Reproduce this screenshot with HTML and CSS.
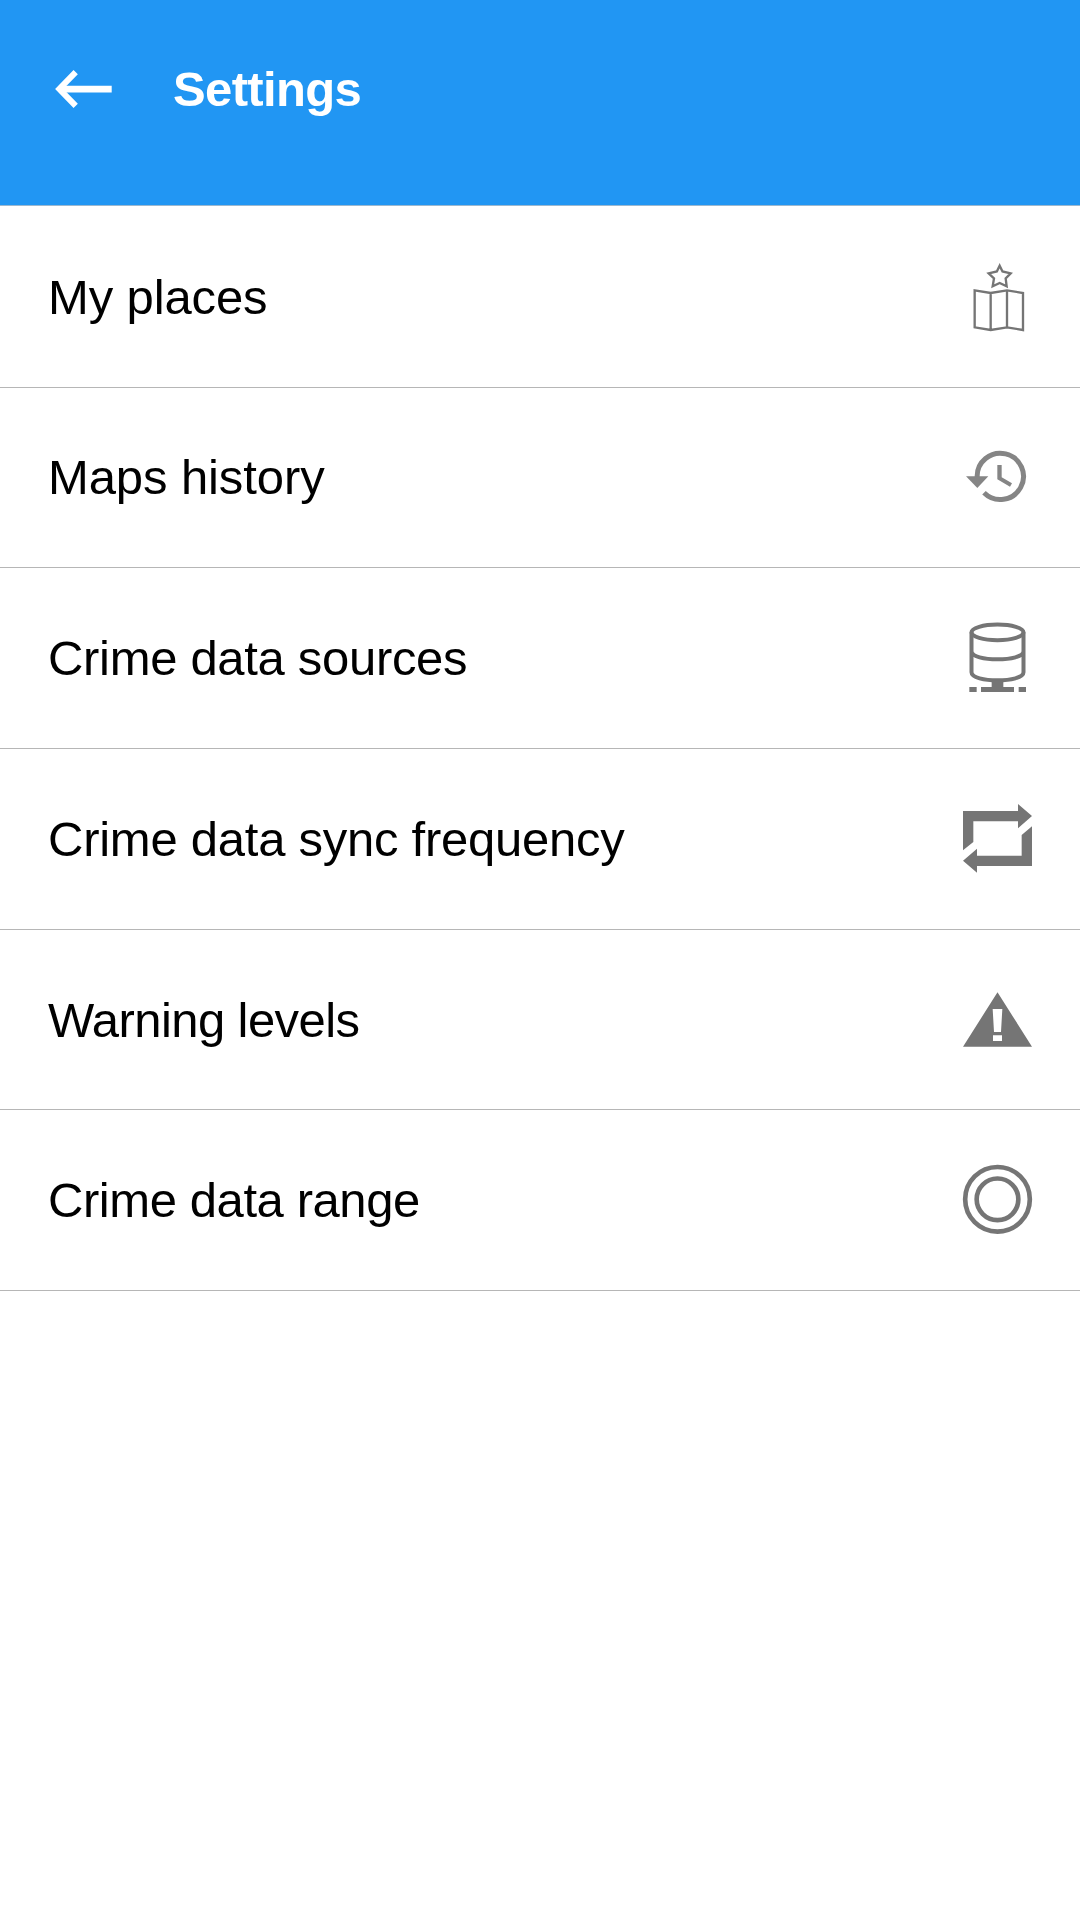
FILE: index.html
```html
<!DOCTYPE html>
<html lang="en">
<head>
<meta charset="utf-8">
<title>Settings</title>
<link rel="stylesheet" href="styles.css">
</head>
<body>
<header class="app-bar">
  <svg class="back" viewBox="0 0 60 44" aria-label="Back"><path class="shaft" d="M59.700 22.100H8"/><path d="M23.700 5.200L7.300 22L23.700 38.800"/></svg>
  <h1 class="title">Settings</h1>
</header>
<main class="list">
  <div class="row places"><span class="label">My places</span>
    <svg class="icon" viewBox="0 0 300 300"><g class="line"><path d="M149 47L157.500 64.500L182 70L167 85L170 109L149 99L128 109L132 85L116 70L140.500 64.500Z"/><path d="M74 121L122 129L171 121L219 129V240L171 232L122 240L74 232ZM122 129V240M171 121V232"/></g></svg></div>
  <div class="row past"><span class="label">Maps history</span>
    <svg class="icon history" viewBox="0 0 300 300"><path class="ring" d="M81.500 142A69.500 69.500 0 1 1 102 188.500"/><path d="M48 139H115L82 174Z"/><path d="M142 105H155V142L186 160L180 170L142 148Z"/></svg></div>
  <div class="row sources"><span class="label">Crime data sources</span>
    <svg class="icon" viewBox="0 0 300 300"><g class="db"><ellipse cx="142.500" cy="67" rx="78" ry="23.500"/><path d="M64.500 67V187C64.500 219 220.500 219 220.500 187V67M64.500 124C64.500 156 220.500 156 220.500 124"/></g><path d="M125 212H160V231H192V246H93V231H125ZM58 231H80V246H58ZM206 231H228V246H206Z"/></svg></div>
  <div class="row sync"><span class="label">Crime data sync frequency</span>
    <svg class="icon" viewBox="0 0 300 300"><path d="M39 63H204V42L246 78L204 115V94H70V156L39 181ZM246 109V228H81V248L39 212L81 176V197H215V135Z"/></svg></div>
  <div class="row warning"><span class="label">Warning levels</span>
    <svg class="icon" viewBox="0 0 300 300"><path fill-rule="evenodd" d="M142.500 67L246 230H39ZM128 117L132 186H153L157 117ZM129 196V213H156V196Z"/></svg></div>
  <div class="row range"><span class="label">Crime data range</span>
    <svg class="icon" viewBox="0 0 300 300"><g class="circles"><circle cx="142.500" cy="148" r="97"/><circle cx="142.500" cy="148" r="62.500"/></g></svg></div>
</main>
</body>
</html>
```
FILE: styles.css
```css
* { box-sizing: border-box; }
body {
  margin: 0;
  background: #fff;
  color: #000;
  font-family: "Liberation Sans", Arial, sans-serif;
}
.app-bar {
  display: flex;
  align-items: flex-start;
  height: 206px;
  padding: 60px 52px;
  gap: 61px;
  background: #2196f3;
  border-bottom: 1px solid #9bb8d0;
}
.back {
  width: 60px;
  height: 44px;
  margin-top: 7px;
  fill: none;
  stroke: #fff;
  stroke-width: 6;
}
.shaft { stroke-width: 6.700; }
.title {
  margin: 0;
  color: #fff;
  font-size: 49px;
  line-height: 58px;
  font-weight: 700;
  letter-spacing: -0.650px;
}
.list {
  display: grid;
  grid-template-rows: 182px 180px 181px 181px 180px 181px;
}
.row {
  display: flex;
  align-items: center;
  justify-content: space-between;
  padding: 0 30px 0 48px;
  border-bottom: 1px solid #b6b6b6;
}
.label {
  font-size: 49px;
  line-height: 60px;
  white-space: nowrap;
}
.icon {
  width: 100px;
  height: 100px;
  fill: #757575;
}
.places .label { letter-spacing: -0.130px; }
.past .label { letter-spacing: -0.100px; margin-bottom: 2px; }
.sources .label { letter-spacing: -0.310px; }
.sync .label { letter-spacing: -0.250px; }
.warning .label { letter-spacing: -0.580px; }
.range .label { letter-spacing: -0.420px; }
.places .icon { margin-top: 7px; }
.past .icon { margin-top: 5px; }
.sources .icon { margin-top: 4px; }
.sync .icon { margin-top: 2px; }
.warning .icon { margin-top: 1px; }
.line, .db, .ring, .circles { fill: none; stroke: #757575; }
.line { stroke-width: 7; }
.db { stroke-width: 12; }
.circles { stroke-width: 14; }
.history { fill: #858585; }
.ring { stroke: #858585; stroke-width: 15; }
```
